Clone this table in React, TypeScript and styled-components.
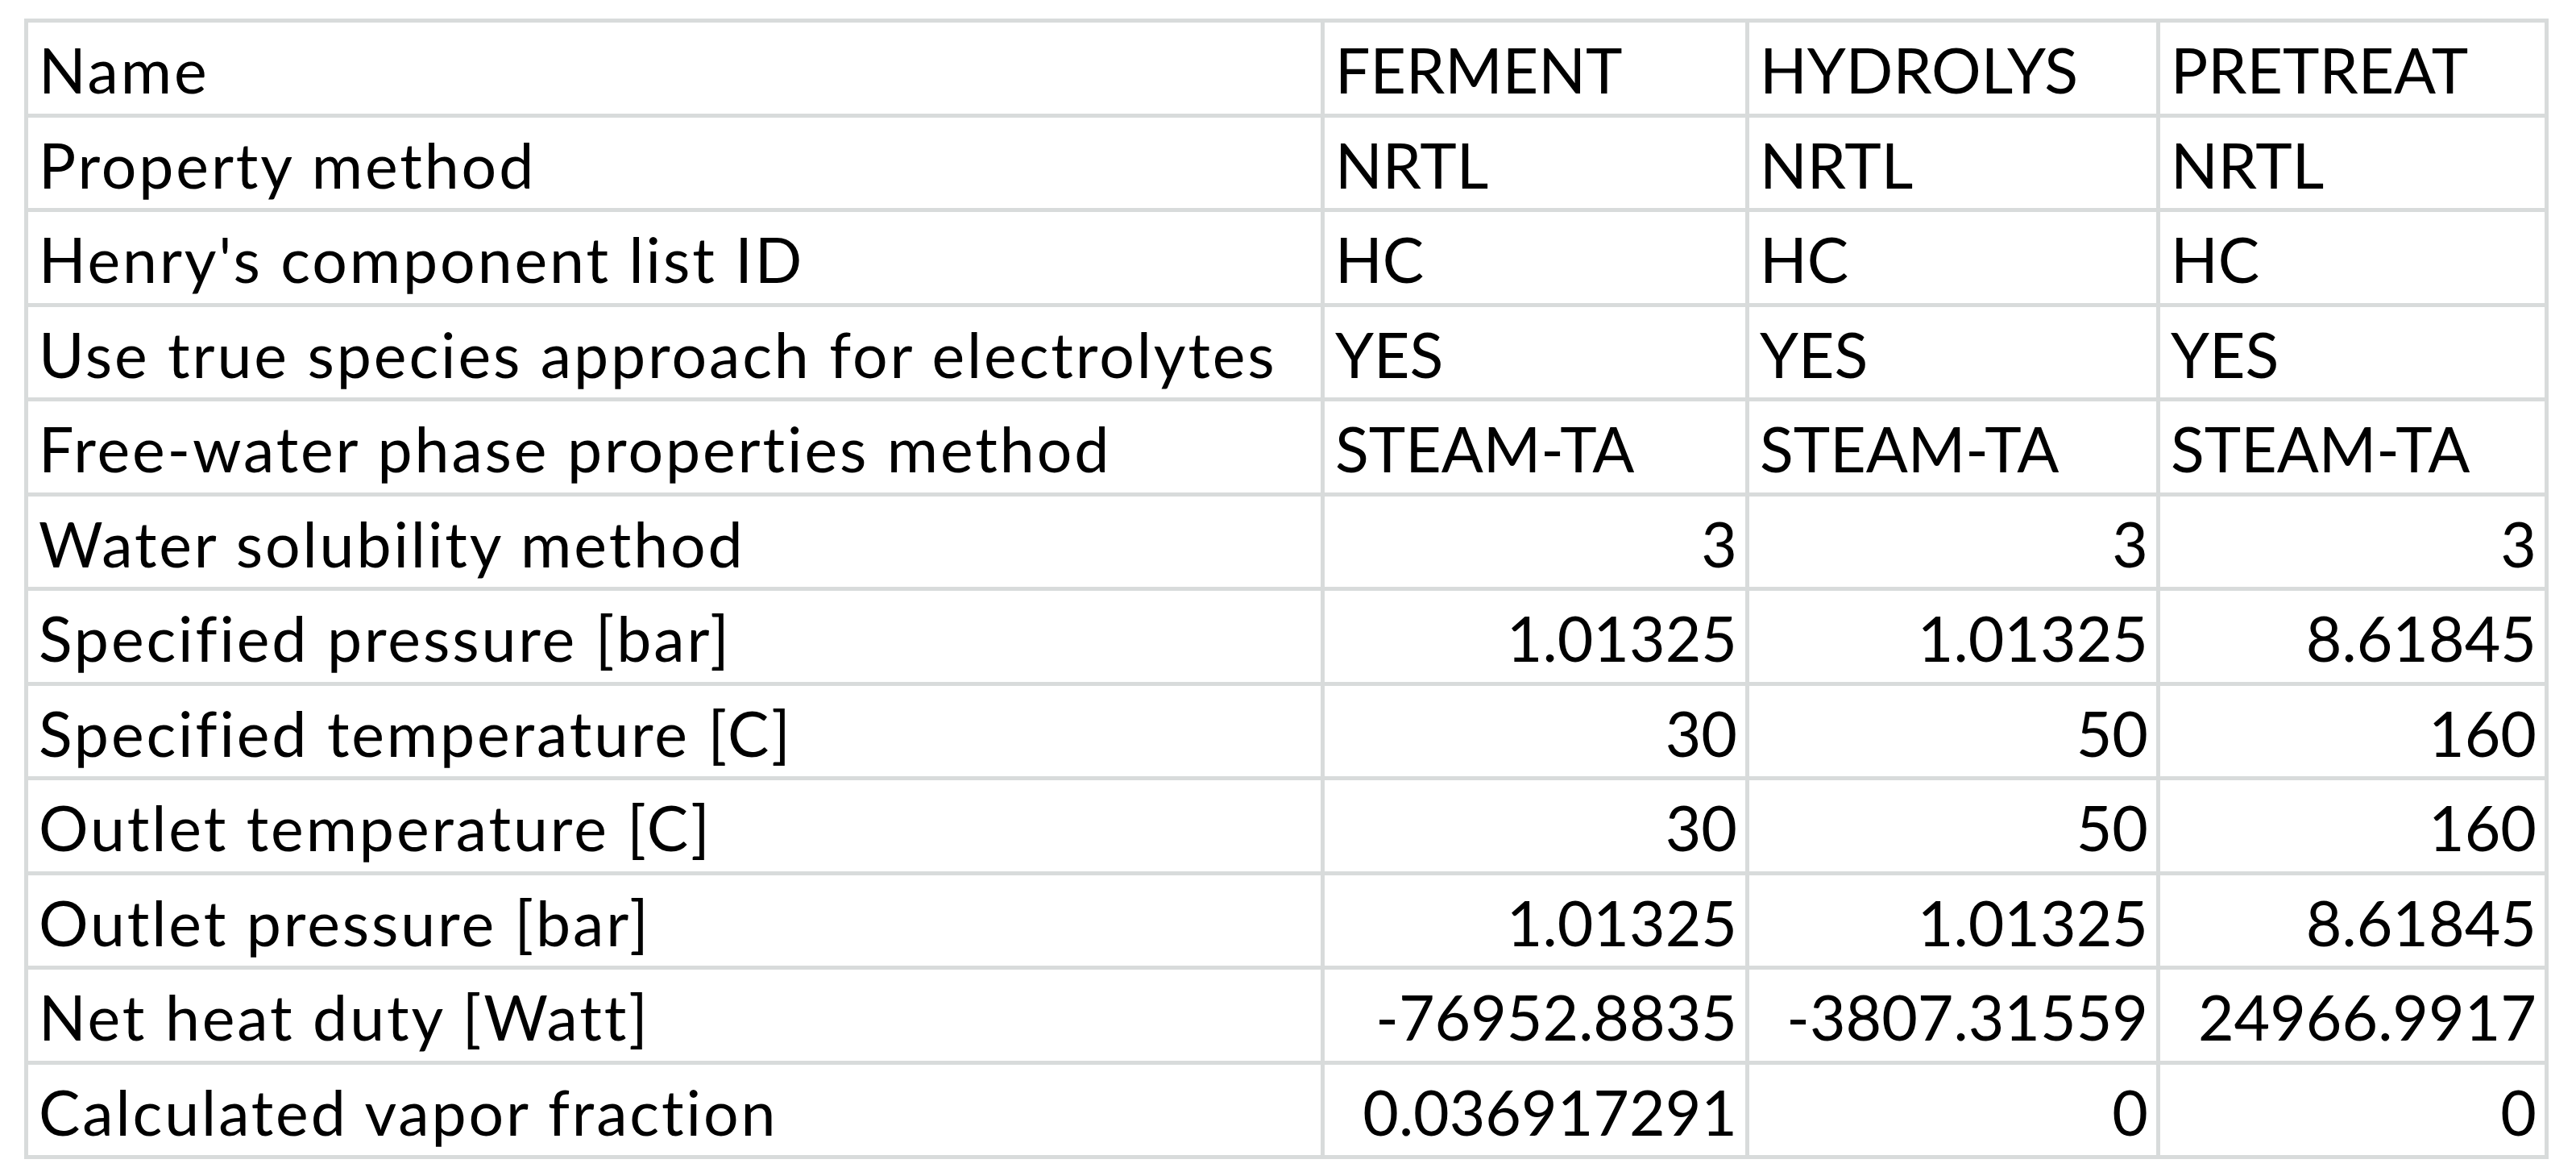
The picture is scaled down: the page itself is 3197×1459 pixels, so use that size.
import React from "react";
import styled, { createGlobalStyle } from "styled-components";

const GlobalStyle = createGlobalStyle`
  html, body { margin: 0; padding: 0; background: #ffffff; }
  body { font-family: Lato, "Liberation Sans", sans-serif; }
`;

const Page = styled.div`
  padding: 23px 0 0 30px;
`;

const Sheet = styled.div`
  display: grid;
  grid-template-columns: 1604px 522px 505px 477px;
  grid-auto-rows: 112.5px;
  gap: 5px;
  padding: 5px;
  width: max-content;
  background: #d8dbdb;
`;

const Cell = styled.div<{ $align?: "left" | "right"; $label?: boolean }>`
  background: #ffffff;
  display: flex;
  align-items: flex-end;
  justify-content: ${(p) => (p.$align === "right" ? "flex-end" : "flex-start")};
  padding: 0 10px 8px 13px;
  font-family: Lato, "Liberation Sans", sans-serif;
  font-size: 77px;
  letter-spacing: ${(p) => (p.$label ? "2.9px" : "0")};
  line-height: 1.2;
  color: #000000;
  white-space: nowrap;
  overflow: hidden;
`;

type Row = [string, string, string, string];

const rows: Row[] = [
  ["Name", "FERMENT", "HYDROLYS", "PRETREAT"],
  ["Property method", "NRTL", "NRTL", "NRTL"],
  ["Henry's component list ID", "HC", "HC", "HC"],
  ["Use true species approach for electrolytes", "YES", "YES", "YES"],
  ["Free-water phase properties method", "STEAM-TA", "STEAM-TA", "STEAM-TA"],
  ["Water solubility method", "3", "3", "3"],
  ["Specified pressure [bar]", "1.01325", "1.01325", "8.61845"],
  ["Specified temperature [C]", "30", "50", "160"],
  ["Outlet temperature [C]", "30", "50", "160"],
  ["Outlet pressure [bar]", "1.01325", "1.01325", "8.61845"],
  ["Net heat duty [Watt]", "-76952.8835", "-3807.31559", "24966.9917"],
  ["Calculated vapor fraction", "0.036917291", "0", "0"],
];

const isNumber = (s: string) => /^-?\d+(\.\d+)?$/.test(s);

export default function App() {
  return (
    <Page>
      <GlobalStyle />
      <Sheet>
        {rows.map((r, i) =>
          r.map((v, j) => (
            <Cell
              key={`${i}-${j}`}
              $label={j === 0}
              $align={j > 0 && isNumber(v) ? "right" : "left"}
            >
              {v}
            </Cell>
          ))
        )}
      </Sheet>
    </Page>
  );
}
